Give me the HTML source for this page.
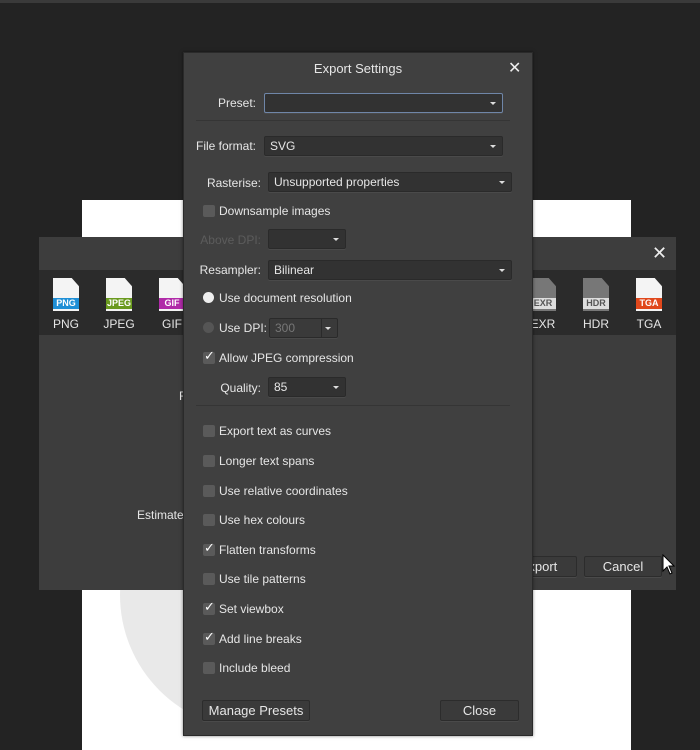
<!DOCTYPE html>
<html><head><meta charset="utf-8"><style>
*{box-sizing:border-box;margin:0;padding:0}
body{width:700px;height:750px;background:#232323;position:relative;overflow:hidden;font-family:"Liberation Sans",sans-serif;font-size:12px;color:#e6e6e6}
.a{position:absolute}
.dd{position:absolute;background:#323232;border:1px solid #2a2a2a;border-radius:2px;height:20px;padding:2px 5px;box-shadow:0 1px 0 #4a4a4a}
.dd:after{content:"";position:absolute;right:6px;top:8px;border-left:3px solid transparent;border-right:3px solid transparent;border-top:3px solid #ddd}
.lbl{position:absolute;text-align:right}
.cb{position:absolute;width:12px;height:12px;background:#5a5a5a;border-radius:2px}
.cb.on:after{content:"✓";position:absolute;left:1px;top:-3px;font-size:13px;font-weight:bold;color:#fff;font-family:"DejaVu Sans",sans-serif}
.ct{position:absolute}
.btn{position:absolute;background:#3a3a3a;border:1px solid #2c2c2c;border-radius:2px;height:21px;text-align:center;line-height:19px;font-size:13px;box-shadow:0 1px 0 #4a4a4a}
.ico{position:absolute;top:278px;width:26px;height:34px}
.ico .pg{position:absolute;left:0;top:0;width:26px;height:33px;background:#f4f4f4;clip-path:polygon(0 0,72% 0,100% 25%,100% 100%,0 100%)}
.ico .band{position:absolute;left:0;top:20px;width:26px;height:11px;color:#fff;font-size:9px;font-weight:bold;text-align:center;line-height:11px}
.icl{position:absolute;top:317px;width:50px;text-align:center;font-size:12px}
</style></head><body>
<div class="a" style="left:0;top:0;width:700px;height:3px;background:#3a3a3a"></div>
<div class="a" style="left:82px;top:200px;width:549px;height:550px;background:#fff;overflow:hidden">
 <div class="a" style="left:38px;top:260px;width:270px;height:270px;border-radius:50%;background:#e9e9e9"></div>
</div>
<!-- back dialog -->
<div class="a" style="left:39px;top:237px;width:637px;height:353px;background:#3d3d3d"></div>
<div class="a" style="left:39px;top:270px;width:637px;height:65px;background:#2b2b2b"></div>
<div class="a" style="left:652px;top:243px;font-size:18px;color:#eee">✕</div>
<div class="ico" style="left:53px"><div class="pg"></div><div class="band" style="background:#1f8fd6">PNG</div></div>
<div class="ico" style="left:106px"><div class="pg"></div><div class="band" style="background:#6a9a1f">JPEG</div></div>
<div class="ico" style="left:159px"><div class="pg"></div><div class="band" style="background:#b02aa8">GIF</div></div>
<div class="ico" style="left:530px"><div class="pg" style="background:#777"></div><div class="band" style="background:#ddd;color:#555">EXR</div></div>
<div class="ico" style="left:583px"><div class="pg" style="background:#777"></div><div class="band" style="background:#ddd;color:#555">HDR</div></div>
<div class="ico" style="left:636px"><div class="pg"></div><div class="band" style="background:#e0481c">TGA</div></div>
<div class="icl" style="left:41px">PNG</div>
<div class="icl" style="left:94px">JPEG</div>
<div class="icl" style="left:147px">GIF</div>
<div class="icl" style="left:518px">EXR</div>
<div class="icl" style="left:571px">HDR</div>
<div class="icl" style="left:624px">TGA</div>
<div class="a" style="left:179px;top:389px">F</div>
<div class="a" style="left:137px;top:508px">Estimated</div>
<div class="btn" style="left:500px;top:556px;width:77px">Export</div>
<div class="btn" style="left:584px;top:556px;width:78px">Cancel</div>
<svg class="a" style="left:662px;top:554px" width="14" height="22" viewBox="0 0 14 22"><path d="M1 1 L1 17 L5 13 L8 20 L10 19 L7 12 L12 12 Z" fill="#fff" stroke="#000" stroke-width="1"/></svg>
<!-- main dialog -->
<div class="a" style="left:183px;top:52px;width:350px;height:684px;background:#404040;border:1px solid #2a2a2a;box-shadow:0 0 3px rgba(0,0,0,.5)"></div>
<div class="a" style="left:184px;top:61px;width:348px;text-align:center;font-size:13px">Export Settings</div>
<div class="a" style="left:508px;top:58px;font-size:16px;color:#eee">✕</div>
<div class="lbl" style="left:190px;top:96px;width:66px">Preset:</div>
<div class="dd" style="left:264px;top:93px;width:239px;border-color:#6f86a8"></div>
<div class="a" style="left:196px;top:120px;width:314px;height:1px;background:#353535"></div>
<div class="lbl" style="left:190px;top:139px;width:66px">File format:</div>
<div class="dd" style="left:264px;top:136px;width:239px">SVG</div>
<div class="lbl" style="left:190px;top:176px;width:71px">Rasterise:</div>
<div class="dd" style="left:268px;top:172px;width:244px">Unsupported properties</div>
<div class="cb" style="left:203px;top:205px"></div><div class="ct" style="left:219px;top:204px">Downsample images</div>
<div class="lbl" style="left:190px;top:233px;width:71px;color:#5c5c5c">Above DPI:</div>
<div class="dd" style="left:268px;top:229px;width:78px"></div>
<div class="lbl" style="left:190px;top:263px;width:71px">Resampler:</div>
<div class="dd" style="left:268px;top:260px;width:244px">Bilinear</div>
<div class="a" style="left:203px;top:292px;width:11px;height:11px;border-radius:50%;background:#eee"></div><div class="ct" style="left:219px;top:291px">Use document resolution</div>
<div class="a" style="left:203px;top:322px;width:11px;height:11px;border-radius:50%;background:#555"></div><div class="ct" style="left:219px;top:321px">Use DPI:</div>
<div class="dd" style="left:269px;top:318px;width:69px;color:#777;background:#3a3a3a">300</div>
<div class="a" style="left:321px;top:319px;width:1px;height:18px;background:#2a2a2a"></div>
<div class="cb on" style="left:203px;top:352px"></div><div class="ct" style="left:219px;top:351px">Allow JPEG compression</div>
<div class="lbl" style="left:190px;top:381px;width:71px">Quality:</div>
<div class="dd" style="left:268px;top:377px;width:78px">85</div>
<div class="a" style="left:196px;top:405px;width:314px;height:1px;background:#353535"></div>
<div class="cb" style="left:203px;top:425px"></div><div class="ct" style="left:219px;top:424px">Export text as curves</div>
<div class="cb" style="left:203px;top:455px"></div><div class="ct" style="left:219px;top:454px">Longer text spans</div>
<div class="cb" style="left:203px;top:485px"></div><div class="ct" style="left:219px;top:484px">Use relative coordinates</div>
<div class="cb" style="left:203px;top:514px"></div><div class="ct" style="left:219px;top:513px">Use hex colours</div>
<div class="cb on" style="left:203px;top:544px"></div><div class="ct" style="left:219px;top:543px">Flatten transforms</div>
<div class="cb" style="left:203px;top:573px"></div><div class="ct" style="left:219px;top:572px">Use tile patterns</div>
<div class="cb on" style="left:203px;top:603px"></div><div class="ct" style="left:219px;top:602px">Set viewbox</div>
<div class="cb on" style="left:203px;top:633px"></div><div class="ct" style="left:219px;top:632px">Add line breaks</div>
<div class="cb" style="left:203px;top:662px"></div><div class="ct" style="left:219px;top:661px">Include bleed</div>
<div class="btn" style="left:202px;top:700px;width:108px">Manage Presets</div>
<div class="btn" style="left:440px;top:700px;width:79px">Close</div>
</body></html>
